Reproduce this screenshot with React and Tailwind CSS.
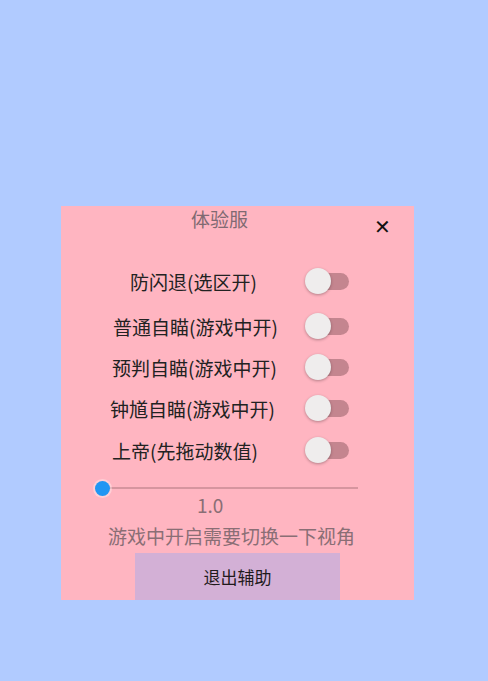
import React from "react";

const font = { fontFamily: '"Noto Sans CJK SC", "Noto Sans", sans-serif' };

function Switch() {
  return (
    <div className="relative h-[26px] w-[44px]">
      <div className="absolute left-[4px] top-[5px] h-[17px] w-[40px] rounded-full bg-[#c4858f]" />
      <div className="absolute left-0 top-0 h-[26px] w-[26px] rounded-full bg-[#efeded] shadow-[0_1px_3px_rgba(0,0,0,0.3)]" />
    </div>
  );
}

function Row({ label, pl, mt }) {
  return (
    <div className={`flex h-[40px] items-center ${mt}`}>
      <div className={`w-[244px] ${pl} text-[19px] leading-none text-[#222]`}>{label}</div>
      <Switch />
    </div>
  );
}

export default function App() {
  return (
    <div className="min-h-[681px] bg-[#b1cbff] pl-[61px] pt-[206px]" style={font}>
      <div className="h-[394px] w-[353px] bg-[#ffb5c1]">
        <div className="relative h-[26px]">
          <div className="pl-[130px] pt-[3px] text-[19px] leading-[20px] text-[#7f6a72]">体验服</div>
          <div className="absolute left-[313px] top-[10px] text-[20px] leading-none text-[#111]">✕</div>
        </div>
        <Row label="防闪退(选区开)" pl="pl-[69px]" mt="mt-[29px]" />
        <Row label="普通自瞄(游戏中开)" pl="pl-[52px]" mt="mt-[5px]" />
        <Row label="预判自瞄(游戏中开)" pl="pl-[51px]" mt="mt-[1px]" />
        <Row label="钟馗自瞄(游戏中开)" pl="pl-[49px]" mt="mt-[1px]" />
        <Row label="上帝(先拖动数值)" pl="pl-[51px]" mt="mt-[2px]" />
        <div className="mt-[10px] flex h-[16px] items-center pl-[34px]">
          <div className="relative flex h-[16px] w-[264px] items-center">
            <div className="ml-[7px] h-[2px] w-[256px] bg-[#d6959f]" />
            <div className="absolute left-0 top-[0.5px] h-[15px] w-[15px] rounded-full bg-[#2196f3] shadow-[0_0_0_2px_rgba(255,255,255,0.35)]" />
          </div>
        </div>
        <div className="pl-[136px] text-[19px] leading-[18px] text-[#8a6e75]">1.0</div>
        <div className="mt-[11px] pl-[47px] text-[19px] leading-[22px] text-[#8a6e75]">游戏中开启需要切换一下视角</div>
        <div className="ml-[74px] mt-[6px] flex h-[47px] w-[205px] items-center justify-center bg-[#d3b0d6] text-[17px] text-[#1f1a1c]">
          退出辅助
        </div>
      </div>
    </div>
  );
}
